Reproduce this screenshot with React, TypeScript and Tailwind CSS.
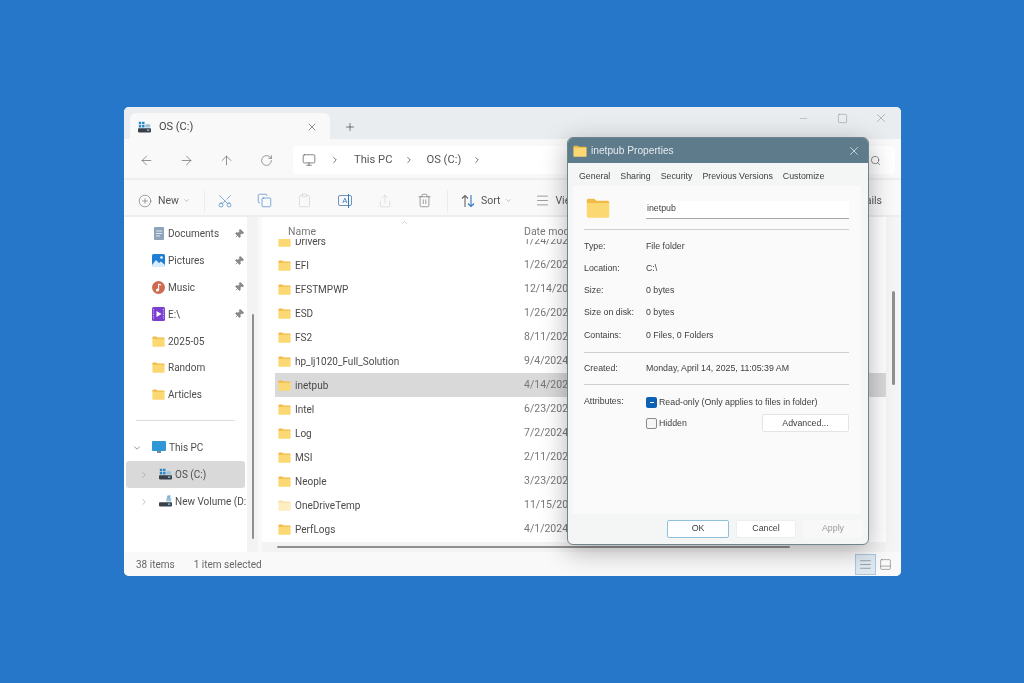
import React from 'react';
import {
  ArrowLeft, ArrowRight, ArrowUp, RotateCw, Monitor, ChevronRight, ChevronDown, ChevronUp, X, Plus, Minus, Square,
  CirclePlus, Scissors, Copy, Clipboard, Share, Trash2, Menu, Search, Pin, PanelBottom, AlignJustify,
} from 'lucide-react';

const explorerFont = "font-['Roboto',sans-serif]";
const dialogFont = "font-['Liberation_Sans',Arial,sans-serif]";

function Folder({ size = 13, faded = false }: { size?: number; faded?: boolean }) {
  return (
    <svg width={size} height={size} viewBox="0 0 16 16" className={faded ? 'opacity-45 shrink-0' : 'shrink-0'}>
      <path d="M0.5 3c0-.6.5-1.1 1.1-1.1h3.9l1.4 1.3h7.5c.6 0 1.1.5 1.1 1.1V5H.5z" fill="#f0bc45" />
      <path d="M.5 4.6h15v8.7c0 .7-.5 1.2-1.2 1.2H1.7c-.7 0-1.2-.5-1.2-1.2z" fill="#fcd873" />
    </svg>
  );
}

function DriveIcon({ system = false }: { system?: boolean }) {
  return (
    <svg width="13" height="13" viewBox="0 0 16 16" className="shrink-0">
      {system && <path d="M1 1h3v3H1zM5 1h3v3H5zM1 5h3v3H1zM5 5h3v3H5z" fill="#2a86c8" />}
      {!system && <path d="M10 1l4-1v6h-4z" fill="#7fb2d8" />}
      <path d="M9 4h6v4H9z" fill="#9cc4de" />
      <rect x="0" y="9" width="16" height="5" rx="1" fill="#3a4048" />
      <rect x="11" y="10.5" width="3" height="1.5" fill="#8fd0f0" />
    </svg>
  );
}

function ToolButton({ children }: { children: React.ReactNode }) {
  return <div className="w-[40px] h-[30px] flex items-center justify-center shrink-0">{children}</div>;
}

function SideRow({ icon, label, pinned }: { icon: React.ReactNode; label: string; pinned?: boolean }) {
  return (
    <div className="h-[26.8px] flex items-center pl-[28px] pr-[3px] text-[10px] text-[#4d4d4d]">
      <div className="w-[13px] flex justify-center shrink-0">{icon}</div>
      <span className="ml-[2px] pl-[1px] flex-1">{label}</span>
      {pinned && <Pin size={10} className="text-[#8a8a8a] fill-[#8a8a8a] rotate-45" />}
    </div>
  );
}

function QuickIcon({ kind }: { kind: 'docs' | 'pics' | 'music' | 'video' }) {
  if (kind === 'docs')
    return (
      <svg width="12" height="13" viewBox="0 0 12 13">
        <rect x="1" y="0" width="10" height="13" rx="1" fill="#8ea4bd" />
        <path d="M3 4h6M3 6.5h6M3 9h4" stroke="#dfe6ee" strokeWidth="1" />
      </svg>
    );
  if (kind === 'pics')
    return (
      <svg width="13" height="13" viewBox="0 0 13 13">
        <rect width="13" height="13" rx="1.5" fill="#1f7fd6" />
        <circle cx="9.5" cy="3.5" r="1.3" fill="#fff" />
        <path d="M0 11l4-5 3 3 2-1.5 4 3.5v2H0z" fill="#d8ecfb" />
      </svg>
    );
  if (kind === 'music')
    return (
      <svg width="13" height="13" viewBox="0 0 13 13">
        <circle cx="6.5" cy="6.5" r="6.5" fill="#cf6a50" />
        <circle cx="5.5" cy="9" r="1.6" fill="#fff" />
        <path d="M6.6 9V3.2l2.6.8" stroke="#fff" strokeWidth="1.1" fill="none" />
      </svg>
    );
  return (
    <svg width="13" height="14" viewBox="0 0 13 14">
      <rect width="13" height="14" rx="1.5" fill="#7b3fd0" />
      <path d="M4.5 4l5 3-5 3z" fill="#fff" />
      <path d="M1.5 2v10M11.5 2v10" stroke="#c9aef2" strokeWidth="1.2" strokeDasharray="1.2 1.2" />
    </svg>
  );
}

const files: [string, string, boolean?][] = [
  ['Drivers', '1/24/2024'],
  ['EFI', '1/26/2024'],
  ['EFSTMPWP', '12/14/2023'],
  ['ESD', '1/26/2024'],
  ['FS2', '8/11/2024'],
  ['hp_lj1020_Full_Solution', '9/4/2024'],
  ['inetpub', '4/14/2025'],
  ['Intel', '6/23/2024'],
  ['Log', '7/2/2024'],
  ['MSI', '2/11/2024'],
  ['Neople', '3/23/2024'],
  ['OneDriveTemp', '11/15/2024', true],
  ['PerfLogs', '4/1/2024'],
];

function FileRow({ name, date, faded }: { name: string; date: string; faded?: boolean }) {
  const selected = name === 'inetpub';
  return (
    <div className={`h-[24px] flex items-center pl-[3px] ${selected ? 'bg-[#d9d9d9]' : ''}`}>
      <Folder faded={faded} />
      <span className="ml-[4px] w-[229px] text-[10px] text-[#4a4a4a] whitespace-nowrap">{name}</span>
      <span className="text-[10.5px] text-[#777] whitespace-nowrap">{date}</span>
    </div>
  );
}

function InfoRow({ label, value }: { label: string; value: string }) {
  return (
    <div className="flex items-center h-[22.3px]">
      <span className="w-[62px] shrink-0">{label}</span>
      <span>{value}</span>
    </div>
  );
}

function PropertiesDialog() {
  return (
    <div className={`${dialogFont} absolute z-20 left-[443px] top-[30px] w-[302px] h-[408px] rounded-[6px] border border-[#71848e] bg-[#f4f5f5] shadow-[0_6px_26px_rgba(0,0,0,0.3)] flex flex-col overflow-hidden text-[8.8px] text-[#3d3d3d]`}>
      <div className="h-[25px] bg-[#5e7b8b] flex items-center pl-[5px] pr-[7px] shrink-0">
        <Folder size={14} />
        <span className="ml-[4px] text-[10.2px] text-[#e4ebef] flex-1">inetpub Properties</span>
        <X size={14} strokeWidth={1.3} className="text-[#e8eef1]" />
      </div>
      <div className="h-[23px] flex items-center pl-[11px] pt-[5px] shrink-0">
        <span className="mr-[10px] -mt-[1px]">General</span>
        <span className="mr-[10px]">Sharing</span>
        <span className="mr-[10px]">Security</span>
        <span className="mr-[10px]">Previous Versions</span>
        <span>Customize</span>
      </div>
      <div className="ml-[5px] mr-[7px] h-[328px] bg-[#fafafa] pl-[11px] pr-[12px] shrink-0">
        <div className="flex items-center h-[44px] border-b border-[#cfcfcf]">
          <div className="w-[62px] shrink-0 pl-[2px]">
            <Folder size={24} />
          </div>
          <div className="w-[204px] h-[18px] bg-white border-b border-[#a8a8a8] flex items-center pl-[1px] mt-[4px]">inetpub</div>
        </div>
        <div className="pt-[5px] pb-[6px] border-b border-[#cfcfcf]">
          <InfoRow label="Type:" value="File folder" />
          <InfoRow label="Location:" value="C:\" />
          <InfoRow label="Size:" value="0 bytes" />
          <InfoRow label="Size on disk:" value="0 bytes" />
          <InfoRow label="Contains:" value="0 Files, 0 Folders" />
        </div>
        <div className="h-[32px] flex items-center border-b border-[#cfcfcf]">
          <span className="w-[62px]">Created:</span>
          <span>Monday, April 14, 2025, 11:05:39 AM</span>
        </div>
        <div className="flex pt-[10px]">
          <span className="w-[62px] shrink-0">Attributes:</span>
          <div className="flex-1">
            <div className="flex items-center h-[12px] mt-[1px]">
              <span className="w-[11px] h-[11px] rounded-[2px] bg-[#0c63b5] flex items-center justify-center">
                <span className="w-[4px] h-[1px] bg-white" />
              </span>
              <span className="ml-[2px]">Read-only (Only applies to files in folder)</span>
            </div>
            <div className="flex items-center mt-[6px]">
              <span className="w-[11px] h-[11px] rounded-[2px] border border-[#8a8a8a] bg-[#f6f6f6]" />
              <span className="ml-[2px] flex-1">Hidden</span>
              <div className="w-[87px] h-[18px] bg-white border border-[#e4e4e4] rounded-[2px] flex items-center justify-center">Advanced...</div>
            </div>
          </div>
        </div>
      </div>
      <div className="flex justify-end gap-[7px] pr-[5px] pt-[6px]">
        <div className="w-[62px] h-[18px] border border-[#8fbfdc] rounded-[2px] bg-[#fdfeff] flex items-center justify-center">OK</div>
        <div className="w-[60px] h-[18px] bg-white rounded-[2px] border border-[#eeeeee] flex items-center justify-center">Cancel</div>
        <div className="w-[60px] h-[18px] bg-[#f8f8f8] rounded-[2px] flex items-center justify-center text-[#9a9a9a]">Apply</div>
      </div>
    </div>
  );
}

export default function App() {
  return (
    <div className={`${explorerFont} w-[1024px] h-[683px] bg-[#2676ca] pt-[107px] pl-[124px] overflow-hidden blur-[0.3px]`}>
      <div className="relative w-[777px] h-[469px] rounded-[5px] bg-[#f9f9f9] flex flex-col">
        {/* tab strip */}
        <div className="h-[32px] bg-[#eaedef] rounded-t-[5px] flex items-end pl-[6px] shrink-0">
          <div className="w-[200px] h-[26px] bg-[#f9f9f9] rounded-t-[6px] flex items-center pl-[8px] pr-[12px] pt-[2px] text-[11px] text-[#444]">
            <DriveIcon system />
            <span className="ml-[8px] flex-1">OS (C:)</span>
            <X size={12} strokeWidth={1.3} className="text-[#555]" />
          </div>
          <div className="h-[26px] flex items-center ml-[14px] pt-[2px]">
            <Plus size={12} strokeWidth={1.4} className="text-[#444]" />
          </div>
          <div className="flex-1 h-[32px] flex items-start pt-[4px] justify-end pr-[13px] gap-[26.5px] text-[#8d8d8d]">
            <Minus size={11} strokeWidth={1} className="mt-[2px] mr-[1.5px]" />
            <Square size={11} strokeWidth={1.1} className="mt-[2px]" />
            <X size={14} strokeWidth={1} />
          </div>
        </div>
        {/* address row */}
        <div className="h-[41px] flex items-center pt-[3px] pl-[2px] pr-[6px] border-b-2 border-[#eeeeee] shrink-0 text-[#666]">
          <ToolButton><ArrowLeft size={15} strokeWidth={1.1} /></ToolButton>
          <ToolButton><ArrowRight size={15} strokeWidth={1.1} /></ToolButton>
          <ToolButton><ArrowUp size={15} strokeWidth={1.1} /></ToolButton>
          <ToolButton><RotateCw size={13} strokeWidth={1.2} /></ToolButton>
          <div className="flex-1 ml-[7px] h-[28px] bg-white rounded-[4px] flex items-center pl-[9px] text-[11.2px] text-[#555]">
            <Monitor size={14} strokeWidth={1.2} />
            <ChevronRight size={10} className="ml-[14px]" />
            <span className="ml-[14px]">This PC</span>
            <ChevronRight size={10} className="ml-[12px]" />
            <span className="ml-[12px]">OS (C:)</span>
            <ChevronRight size={10} className="ml-[11px]" />
            <div className="flex-1" />
            <Search size={11} strokeWidth={1.4} className="mr-[14px]" />
          </div>
        </div>
        {/* toolbar */}
        <div className="h-[37px] flex items-center pt-[6px] pl-[14px] border-b-2 border-[#eeeeee] shrink-0 text-[#666]">
          <CirclePlus size={14} strokeWidth={1} />
          <span className="ml-[6px] text-[10.5px] text-[#555]">New</span>
          <ChevronDown size={7} className="ml-[4px] text-[#999]" />
          <div className="w-px h-[22px] bg-[#ececec] ml-[14px]" />
          <ToolButton><Scissors size={16} strokeWidth={1} className="text-[#3f82c8] -rotate-90" /></ToolButton>
          <ToolButton><Copy size={15} strokeWidth={1} className="text-[#2f78c4]" /></ToolButton>
          <ToolButton><Clipboard size={15} strokeWidth={1} className="text-[#c8ccd0]" /></ToolButton>
          <ToolButton>
            <div className="relative w-[14px] h-[11px] border border-[#6f93b8] rounded-[2px] flex items-center justify-center text-[8px] leading-none text-[#2f78c4]">
              A
              <span className="absolute right-[2px] -top-[2px] w-px h-[14px] bg-[#2f78c4]" />
            </div>
          </ToolButton>
          <ToolButton><Share size={14} strokeWidth={1} className="text-[#c8ccd0]" /></ToolButton>
          <ToolButton><Trash2 size={15} strokeWidth={1} /></ToolButton>
          <div className="w-px h-[22px] bg-[#ececec] ml-[2px]" />
          <svg width="14" height="14" viewBox="0 0 14 14" fill="none" strokeWidth="1.1" className="ml-[13px]">
            <path d="M4 13V1.5M1 4.5l3-3 3 3" stroke="#666" />
            <path d="M10 1v11.5M7 9.5l3 3 3-3" stroke="#2f78c4" />
          </svg>
          <span className="ml-[6px] text-[10.5px] text-[#555]">Sort</span>
          <ChevronDown size={7} className="ml-[5px] text-[#999]" />
          <Menu size={15} strokeWidth={1} className="ml-[23px]" />
          <span className="ml-[5px] text-[10.5px] text-[#555]">View</span>
          <div className="flex-1" />
          <span className="mr-[19px] text-[10.5px] text-[#555]">Details</span>
        </div>
        {/* sidebar and files */}
        <div className="flex-1 flex min-h-0">
          <div className="w-[123px] shrink-0 overflow-hidden bg-white pt-[3.5px]">
            <SideRow icon={<QuickIcon kind="docs" />} label="Documents" pinned />
            <SideRow icon={<QuickIcon kind="pics" />} label="Pictures" pinned />
            <SideRow icon={<QuickIcon kind="music" />} label="Music" pinned />
            <SideRow icon={<QuickIcon kind="video" />} label="E:\" pinned />
            <SideRow icon={<Folder />} label="2025-05" />
            <SideRow icon={<Folder />} label="Random" />
            <SideRow icon={<Folder />} label="Articles" />
            <div className="mx-[12px] mt-[12px] mb-[13px] h-px bg-[#dcdcdc]" />
            <div className="h-[27px] flex items-center pl-[8px] text-[10px] text-[#4d4d4d]">
              <ChevronDown size={10} strokeWidth={1.4} />
              <svg width="14" height="13" viewBox="0 0 14 13" className="ml-[10px]">
                <rect width="14" height="10" rx="1" fill="#2f97d6" />
                <path d="M5 10h4v2H5z" fill="#7a8a96" />
              </svg>
              <span className="ml-[2px] pl-[1px]">This PC</span>
            </div>
            <div className="h-[27px] ml-[2px] w-[119px] bg-[#d9d9d9] rounded-[3px] flex items-center pl-[13px] text-[10px] text-[#4d4d4d]">
              <ChevronRight size={10} strokeWidth={1.2} className="text-[#888]" />
              <div className="ml-[10px]"><DriveIcon system /></div>
              <span className="ml-[3px]">OS (C:)</span>
            </div>
            <div className="h-[27px] ml-[2px] flex items-center pl-[13px] text-[10px] text-[#4d4d4d] whitespace-nowrap">
              <ChevronRight size={10} strokeWidth={1.2} className="text-[#888]" />
              <div className="ml-[10px]"><DriveIcon /></div>
              <span className="ml-[3px]">New Volume (D:</span>
            </div>
          </div>
          <div className="w-[11px] shrink-0 bg-[#f3f3f3] flex justify-center pt-[97px]">
            <div className="w-[2px] h-[225px] bg-[#8f8f8f] rounded-full" />
          </div>
          <div className="flex-1 min-w-0 ml-[4px] bg-white flex">
            <div className="flex-1 min-w-0 flex flex-col pl-[13px]">
              <div className="relative h-[22px] shrink-0 pl-[13px] pt-[8px] flex items-start text-[10.5px] leading-[14px] text-[#777] z-10 bg-white">
                <span className="w-[236px]">Name</span>
                <span>Date modified</span>
                <ChevronUp size={9} strokeWidth={1.2} className="absolute left-[125px] top-[1px] text-[#999]" />
              </div>
              <div className="flex-1 overflow-hidden">
                <div className="-mt-[10px]">
                  {files.map(([name, date, faded]) => (
                    <FileRow key={name} name={name} date={date} faded={faded} />
                  ))}
                </div>
              </div>
              <div className="h-[10px] bg-[#f3f3f3] -ml-[13px] pl-[15px] flex items-center shrink-0">
                <div className="w-[513px] h-[2px] bg-[#8f8f8f] rounded-full" />
              </div>
            </div>
            <div className="w-[15px] shrink-0 bg-[#f5f5f5] flex justify-center pt-[74px]">
              <div className="w-[3px] h-[94px] bg-[#8f8f8f] rounded-full" />
            </div>
          </div>
        </div>
        {/* status bar */}
        <div className="h-[24px] flex items-center pl-[12px] pr-[9px] shrink-0 bg-[#f9f9f9] rounded-b-[5px] text-[10px] text-[#666]">
          <span>38 items</span>
          <span className="ml-[19px] flex-1">1 item selected</span>
          <div className="w-[21px] h-[21px] bg-[#dfe9f2] border border-[#a9c8e0] flex items-center justify-center text-[#666]">
            <AlignJustify size={13} strokeWidth={1} />
          </div>
          <PanelBottom size={13} strokeWidth={1} className="ml-[3px] text-[#666]" />
        </div>
        <PropertiesDialog />
      </div>
    </div>
  );
}
